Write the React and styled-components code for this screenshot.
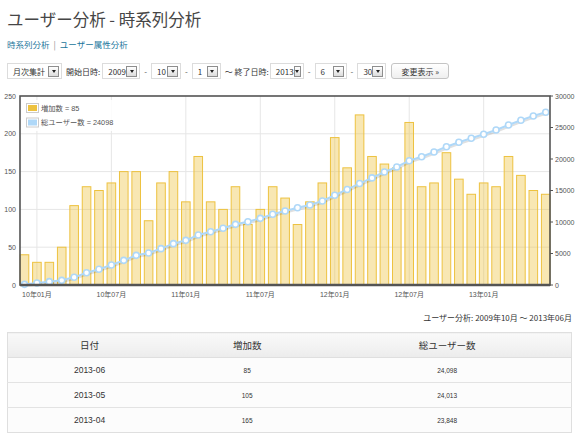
import React from "react";
import styled, { createGlobalStyle } from "styled-components";

const Global = createGlobalStyle`
  html, body { margin: 0; padding: 0; background: #fff; }
  body { font-family: "Liberation Sans", "Noto Sans CJK JP", sans-serif; color: #333; }
`;

const Page = styled.div`
  padding: 0 8px 0 7px;
  width: 565px;
`;

const Title = styled.h2`
  margin: 0;
  padding-top: 8px;
  font-size: 16.5px;
  line-height: 22px;
  font-weight: normal;
  color: #464646;
  font-family: "Noto Sans CJK JP", sans-serif;
`;

const Links = styled.div`
  margin-top: 8px;
  font-size: 8.5px;
  line-height: 12px;
  color: #21759b;
  font-family: "Noto Sans CJK JP", sans-serif;
  display: flex;
  gap: 4px;
`;

const Link = styled.a`
  color: #21759b;
  text-decoration: none;
`;

const Pipe = styled.span`
  color: #888;
`;

const Controls = styled.div`
  margin-top: 13px;
  display: flex;
  align-items: center;
  height: 16px;
  font-size: 8px;
  font-family: "Noto Sans CJK JP", sans-serif;
  color: #333;
`;

const SelectBox = styled.span`
  box-sizing: border-box;
  width: ${(p) => p.$w}px;
  height: 16px;
  border: 1px solid #dcdcdc;
  background: #fff;
  display: inline-flex;
  align-items: center;
  justify-content: space-between;
  padding: 0 2px 0 5px;
  font-size: 8px;
`;

const Arrow = styled.span`
  box-sizing: border-box;
  width: 11px;
  height: 11px;
  border: 1px solid #8e8e8e;
  background: linear-gradient(#ffffff, #dcdcdc);
  display: inline-flex;
  align-items: center;
  justify-content: center;
  &::after {
    content: "";
    border-left: 2.5px solid transparent;
    border-right: 2.5px solid transparent;
    border-top: 3px solid #222;
    margin-top: 1px;
  }
`;

const Label = styled.span`
  margin: 0 ${(p) => p.$r ?? 2}px 0 ${(p) => p.$l ?? 4}px;
  white-space: nowrap;
`;

const Sep = styled.span`
  padding: 0 ${(p) => p.$p ?? 4}px;
  color: #555;
`;

const Button = styled.span`
  box-sizing: border-box;
  margin-left: 5px;
  height: 16px;
  width: 58px;
  border: 1px solid #c4c4c4;
  border-radius: 3px;
  background: linear-gradient(#ffffff, #efefef);
  display: inline-flex;
  align-items: center;
  justify-content: center;
  font-size: 8px;
  color: #333;
`;

const ChartSvg = styled.svg`
  display: block;
  margin: 10px 0 0 -7px;
  font-family: "Liberation Sans", "Noto Sans CJK JP", sans-serif;
`;

const Caption = styled.div`
  margin-top: 9px;
  text-align: right;
  font-size: 8px;
  line-height: 12px;
  font-family: "Noto Sans CJK JP", sans-serif;
  color: #333;
`;

const Table = styled.table`
  margin-top: 8px;
  width: 565px;
  border-collapse: collapse;
  border: 1px solid #dfdfdf;
  font-family: "Noto Sans CJK JP", sans-serif;
`;

const Th = styled.th`
  width: ${(p) => p.$w};
  height: 24px;
  padding: 0;
  background: linear-gradient(#f9f9f9, #ececec);
  border-bottom: 1px solid #dfdfdf;
  font-weight: normal;
  font-size: 9.5px;
  color: #333;
  text-align: center;
`;

const Td = styled.td`
  height: 24px;
  padding: 0;
  background: #fcfcfc;
  border-top: 1px solid #e3e3e3;
  text-align: center;
  color: #333;
  font-size: ${(p) => (p.$num ? "6.5px" : "8.5px")};
  font-family: "Liberation Sans", "Noto Sans CJK JP", sans-serif;
`;

const bars = [40, 30, 30, 50, 105, 130, 125, 135, 150, 150, 85, 135, 150, 110, 170, 110, 100, 130, 80, 100, 130, 115, 80, 110, 135, 195, 155, 225, 170, 160, 155, 215, 130, 135, 175, 140, 120, 135, 130, 170, 145, 125, 120];
const totals = [100, 317, 530, 740, 1220, 1950, 2490, 3170, 3910, 4710, 5080, 5770, 6560, 7090, 7940, 8460, 9000, 9630, 10050, 10580, 11220, 11750, 12270, 12700, 13330, 14250, 15170, 16100, 17000, 17937, 18730, 19730, 20365, 21111, 21952, 22651, 23286, 23921, 24603, 25397, 26143, 26825, 27413];

const PL = 20, PR = 550, PT = 7, PB = 196;
const xi = (i) => 24.5 + 12.41 * i;
const yL = (v) => PB - (v / 250) * (PB - PT);
const yR = (v) => PB - (v / 30000) * (PB - PT);

const xLabels = [
  [1, "10年01月"], [7, "10年07月"], [13, "11年01月"], [19, "11年07月"],
  [25, "12年01月"], [31, "12年07月"], [37, "13年01月"],
];

function Chart() {
  const pts = totals.map((v, i) => `${xi(i)},${yR(v)}`).join(" ");
  const shadow = totals.map((v, i) => `${xi(i) + 0.8},${yR(v) + 1.6}`).join(" ");
  return (
    <ChartSvg width="580" height="214" viewBox="0 0 580 214">
      {[50, 100, 150, 200].map((v) => (
        <line key={v} x1={PL} x2={PR} y1={yL(v)} y2={yL(v)} stroke="#e6e6e6" strokeWidth="1" />
      ))}
      {xLabels.map(([i]) => (
        <line key={i} x1={xi(i)} x2={xi(i)} y1={PT} y2={PB} stroke="#e6e6e6" strokeWidth="1" />
      ))}
      {bars.map((v, i) => (
        <rect key={i} x={xi(i) - 4.3} y={yL(v)} width="8.6" height={PB - yL(v)}
          fill="rgba(237,194,64,0.4)" stroke="#edc240" strokeWidth="1" />
      ))}
      <polyline points={shadow} fill="none" stroke="rgba(0,0,0,0.12)" strokeWidth="2" />
      <polyline points={pts} fill="none" stroke="#afd8f8" strokeWidth="2" />
      {totals.map((v, i) => (
        <circle key={i} cx={xi(i)} cy={yR(v)} r="3" fill="#fff" stroke="#afd8f8" strokeWidth="1.6" />
      ))}
      <rect x={PL} y={PT} width={PR - PL} height={PB - PT} fill="none" stroke="#545454" strokeWidth="1.6" />
      <line x1={PL} x2={PR} y1={PB} y2={PB} stroke="#545454" strokeWidth="2.4" />
      {[0, 50, 100, 150, 200, 250].map((v) => (
        <text key={v} x="16" y={yL(v) + 2.5} fontSize="7" fill="#545454" textAnchor="end">{v}</text>
      ))}
      {[0, 5000, 10000, 15000, 20000, 25000, 30000].map((v) => (
        <g key={v}>
          <line x1={PR} x2={PR + 3} y1={yR(v)} y2={yR(v)} stroke="#545454" strokeWidth="1" />
          <text x={PR + 5} y={yR(v) + 2.5} fontSize="7" fill="#545454">{v}</text>
        </g>
      ))}
      {xLabels.map(([i, t]) => (
        <text key={i} x={xi(i)} y="208" fontSize="7" fill="#545454" textAnchor="middle">{t}</text>
      ))}
      <rect x="23" y="11" width="92" height="31" fill="#fff" opacity="0.85" />
      <rect x="26.5" y="14.5" width="12" height="9" fill="#fff" stroke="#ccc" strokeWidth="1" />
      <rect x="28" y="16" width="9" height="6" fill="#edc240" />
      <rect x="26.5" y="29" width="12" height="9" fill="#fff" stroke="#ccc" strokeWidth="1" />
      <rect x="28" y="30.5" width="9" height="6" fill="#afd8f8" />
      <text x="41" y="21.5" fontSize="7.3" fill="#545454">増加数 = 85</text>
      <text x="41" y="36" fontSize="7.3" fill="#545454">総ユーザー数 = 24098</text>
    </ChartSvg>
  );
}

function Select({ w, children }) {
  return (
    <SelectBox $w={w}>
      <span>{children}</span>
      <Arrow />
    </SelectBox>
  );
}

const rows = [
  ["2013-06", "85", "24,098"],
  ["2013-05", "105", "24,013"],
  ["2013-04", "165", "23,848"],
];

export default function App() {
  return (
    <>
      <Global />
      <Page>
        <Title>ユーザー分析 - 時系列分析</Title>
        <Links>
          <Link href="#">時系列分析</Link>
          <Pipe>|</Pipe>
          <Link href="#">ユーザー属性分析</Link>
        </Links>
        <Controls>
          <Select w={55}>月次集計</Select>
          <Label>開始日時:</Label>
          <Select w={38}>2009</Select>
          <Sep>-</Sep>
          <Select w={30}>10</Select>
          <Sep>-</Sep>
          <Select w={29}>1</Select>
          <Label $l={4} $r={1}>～ 終了日時:</Label>
          <Select w={34}>2013</Select>
          <Sep>-</Sep>
          <Select w={32}>6</Select>
          <Sep>-</Sep>
          <Select w={29}>30</Select>
          <Button>変更表示 »</Button>
        </Controls>
        <Chart />
        <Caption>ユーザー分析: 2009年10月 ～ 2013年06月</Caption>
        <Table>
          <thead>
            <tr>
              <Th $w="29%">日付</Th>
              <Th $w="27%">増加数</Th>
              <Th $w="44%">総ユーザー数</Th>
            </tr>
          </thead>
          <tbody>
            {rows.map((r) => (
              <tr key={r[0]}>
                <Td>{r[0]}</Td>
                <Td $num>{r[1]}</Td>
                <Td $num>{r[2]}</Td>
              </tr>
            ))}
          </tbody>
        </Table>
      </Page>
    </>
  );
}
